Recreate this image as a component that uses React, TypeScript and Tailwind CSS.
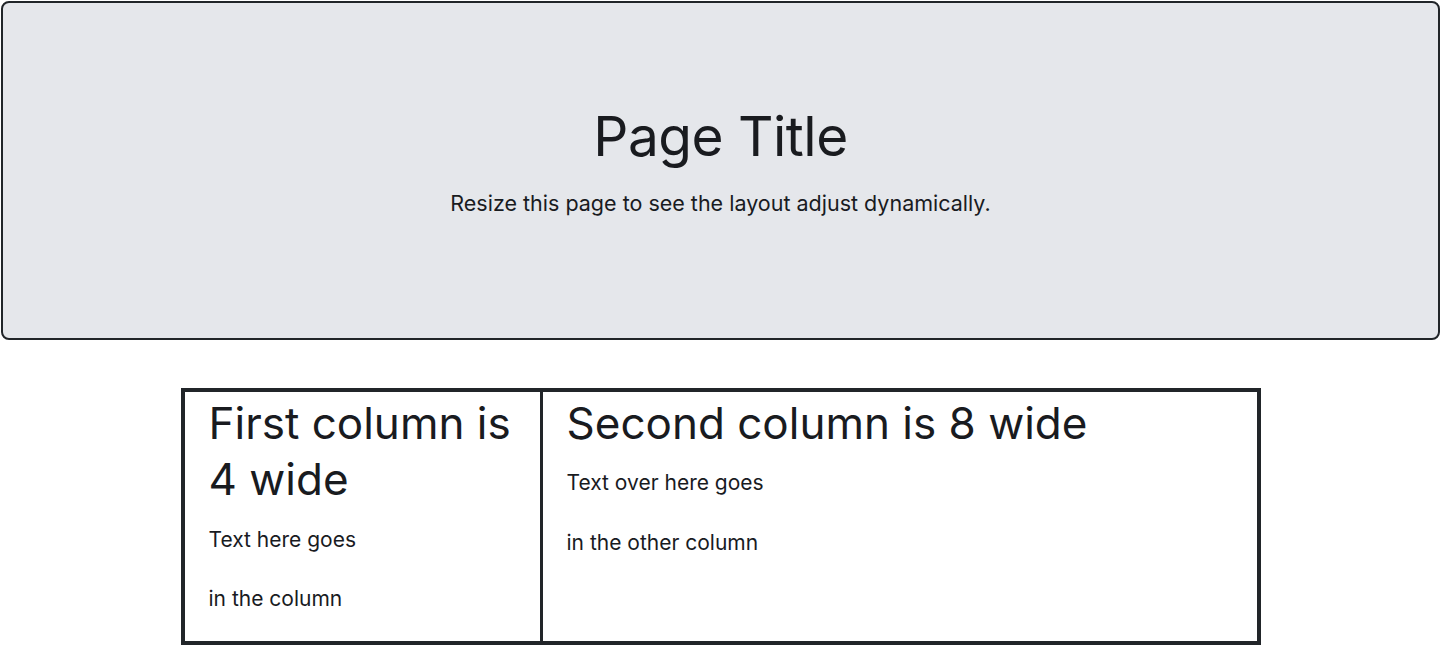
export default function App() {
  return (
    <div className="min-h-screen bg-white text-[#191b1f] font-['Inter','Noto_Sans',sans-serif]">
      <header className="m-px flex h-[339px] flex-col items-center rounded-lg border-2 border-[#212529] bg-[#e5e7eb] pt-[100px] text-center">
        <h1 className="mb-[19px] text-[55px] leading-[1.2] font-normal tracking-[-0.5px]">Page Title</h1>
        <p className="text-[21.5px] leading-[30px]">Resize this page to see the layout adjust dynamically.</p>
      </header>

      <div className="mx-auto mt-[48px] flex w-[1080px] border-4 border-[#212529]">
        <div className="w-[358px] border-r-[3px] border-[#212529] px-6">
          <h1 className="mb-[18px] pt-[3px] text-[44px] leading-[56px] font-normal">First column is 4 wide</h1>
          <p className="mb-[29px] text-[21px] leading-[30px]">Text here goes</p>
          <p className="mb-[27px] text-[21px] leading-[30px]">in the column</p>
        </div>
        <div className="flex-1 px-6">
          <h1 className="mb-[17px] pt-[3px] text-[44px] leading-[56px] font-normal">Second column is 8 wide</h1>
          <p className="mb-[30px] text-[21px] leading-[30px]">Text over here goes</p>
          <p className="text-[21px] leading-[30px]">in the other column</p>
        </div>
      </div>
    </div>
  )
}
